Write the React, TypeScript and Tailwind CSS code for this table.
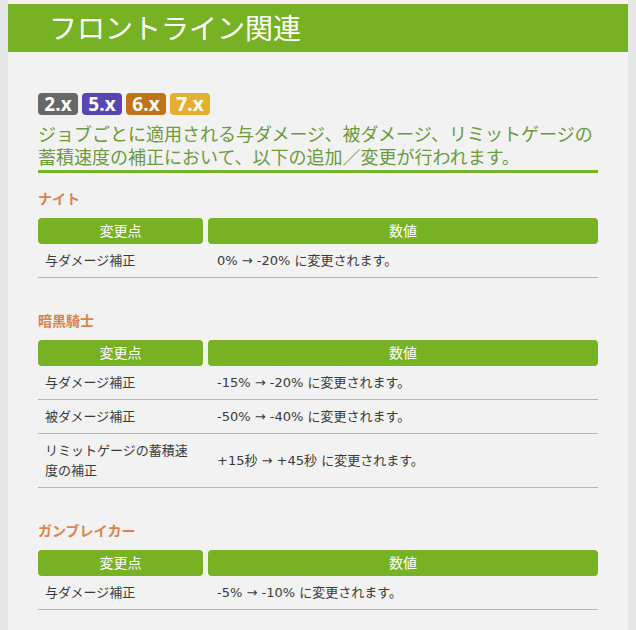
import React from 'react';

type Row = { label: string; value: string };
type Section = { job: string; rows: Row[] };

const sections: Section[] = [
  { job: 'ナイト', rows: [{ label: '与ダメージ補正', value: '0% → -20% に変更されます。' }] },
  {
    job: '暗黒騎士',
    rows: [
      { label: '与ダメージ補正', value: '-15% → -20% に変更されます。' },
      { label: '被ダメージ補正', value: '-50% → -40% に変更されます。' },
      { label: 'リミットゲージの蓄積速度の補正', value: '+15秒 → +45秒 に変更されます。' },
    ],
  },
  { job: 'ガンブレイカー', rows: [{ label: '与ダメージ補正', value: '-5% → -10% に変更されます。' }] },
];

const badges = [
  { text: '2.x', cls: 'bg-[#676767]' },
  { text: '5.x', cls: 'bg-[#5647b0]' },
  { text: '6.x', cls: 'bg-[#c0741a]' },
  { text: '7.x', cls: 'bg-[#e3b12f]' },
];

const font = { fontFamily: '"Open Sans", "Noto Sans CJK JP", sans-serif' };
const rowFont = { fontFamily: '"DejaVu Sans", "Noto Sans CJK JP", sans-serif' };

const JobTable: React.FC<{ section: Section }> = ({ section }) => (
  <section>
    <h3 className="text-[14px] leading-[20px] font-bold text-[#d7844f]">{section.job}</h3>
    <div className="mt-[9px] flex gap-[5px]">
      <div className="w-[165px] h-[26px] rounded-[4px] bg-[#76b224] text-white text-[14px] leading-[26px] text-center">
        変更点
      </div>
      <div className="flex-1 h-[26px] rounded-[4px] bg-[#76b224] text-white text-[14px] leading-[26px] text-center">
        数値
      </div>
    </div>
    {section.rows.map(row => (
      <div
        key={row.label}
        className="flex gap-[5px] items-center border-b border-[#b5b5b5] text-[13px] leading-[20px] text-[#3a3a3a]"
        style={rowFont}
      >
        <div className="w-[165px] px-[7px] py-[6.5px]">{row.label}</div>
        <div className="flex-1 px-[9px] py-[6.5px]">{row.value}</div>
      </div>
    ))}
  </section>
);

const App: React.FC = () => {
  return (
    <div className="min-h-[630px] bg-[#e6e6e6] px-[8px]" style={font}>
      <div className="min-h-[630px] bg-[#f2f2f2] pt-[4px]">
        <header className="h-[48px] bg-[#76b224] pl-[41px] flex items-center">
          <h1 className="text-white text-[28px] leading-none">フロントライン関連</h1>
        </header>

        <div className="px-[30px] pb-[20px]">
          <div className="mt-[41px] flex gap-[4px]">
            {badges.map(b => (
              <span
                key={b.text}
                className={`${b.cls} w-[40px] h-[22px] rounded-[4px] text-white font-bold text-[19px] leading-[22px] text-center`}
              >
                {b.text}
              </span>
            ))}
          </div>
          <p className="mt-[8px] pb-[2px] text-[18px] leading-[22.5px] text-[#6c9a3c] border-b-[3px] border-[#76b224]">
            ジョブごとに適用される与ダメージ、被ダメージ、リミットゲージの蓄積速度の補正において、以下の追加／変更が行われます。
          </p>

          <div className="mt-[16px] flex flex-col gap-[33px]">
            {sections.map(s => (
              <JobTable key={s.job} section={s} />
            ))}
          </div>
        </div>
      </div>
    </div>
  );
};

export default App;
